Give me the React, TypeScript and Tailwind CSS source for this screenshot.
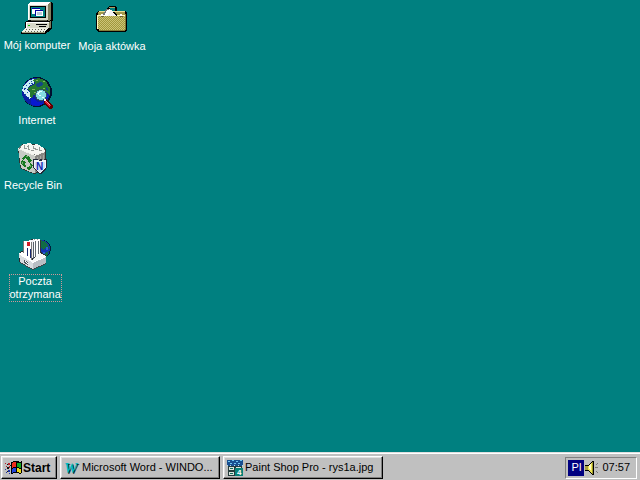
import React from 'react';

const raised = 'border border-t-white border-l-white border-r-black border-b-black shadow-[inset_-1px_-1px_0_#808080,inset_1px_1px_0_#dfdfdf]';

function ComputerIcon() {
  return (
    <svg viewBox="0 0 32 32" className="w-8 h-8" shapeRendering="crispEdges" aria-hidden="true">
      <path d="M9 0h22v1h1v18l-4 3H7V2z" fill="#000" />
      <path d="M9 0h21l-3 2H7z" fill="#fff" />
      <path d="M27 2l3-2v17l-3 3z" fill="#808060" />
      <path d="M7 2h20v16H7z" fill="#d8d8c8" />
      <path d="M7 2h20v1H8v15H7z" fill="#fff" />
      <path d="M9 4h16v12H9z" fill="#000" />
      <path d="M10 5h14v10H10z" fill="#008080" />
      <path d="M11 6h8v6h-8z" fill="#fff" />
      <path d="M11 6h8v1h-8z" fill="#0000a0" />
      <path d="M14 8h8v6h-8z" fill="#0000a0" />
      <path d="M15 9h7v5h-7z" fill="#fff" />
      <path d="M16 10h5v3h-5z" fill="#b8c8d8" />
      <path d="M10 18h16v2H10z" fill="#606050" />
      <path d="M4 20l2-1h25v7l-3 4H4z" fill="#000" />
      <path d="M5 20h23v6H5z" fill="#d8d8c8" />
      <path d="M5 20h23v1H6v5H5z" fill="#fff" />
      <path d="M28 20l2-1v6l-2 2z" fill="#808060" />
      <path d="M7 23h2v1H7z" fill="#00c000" />
      <path d="M15 22h11v1H15zM18 24h7v1h-7z" fill="#000" />
      <path d="M4 26h25l-3 5-2 1H0v-2z" fill="#000" />
      <path d="M4 26h23l-3 4H1z" fill="#f0f0e4" />
      <path d="M1 30h23v1H1z" fill="#a0a080" />
      <path d="M5 27h1v1H5zM8 27h1v1H8zM11 27h1v1h-1zM14 27h1v1h-1zM17 27h1v1h-1zM20 27h1v1h-1zM23 27h1v1h-1zM4 29h1v1H4zM7 29h1v1H7zM10 29h1v1h-1zM13 29h1v1h-1zM16 29h1v1h-1zM19 29h1v1h-1zM22 29h1v1h-1z" fill="#606050" />
    </svg>
  );
}

function BriefcaseIcon() {
  return (
    <svg viewBox="0 0 32 32" className="w-8 h-8" shapeRendering="crispEdges" aria-hidden="true">
      <defs>
        <pattern id="weave" width="2" height="2" patternUnits="userSpaceOnUse">
          <path d="M0 0h2v2H0z" fill="#ccc478" />
          <path d="M0 0h1v1H0zM1 1h1v1H1z" fill="#a0983c" />
        </pattern>
      </defs>
      <path d="M11 5l2-2h6l2 2v5h-2V6l-1-1h-4l-1 1v4h-2z" fill="#000" />
      <path d="M13 4h6v1h-6z" fill="#a8a060" />
      <path d="M2 8h27l2 2v17l-2 2H2l-2-2V11z" fill="#000" />
      <path d="M3 8h26v5H2v-3z" fill="#a49a4a" />
      <path d="M3 8h26v1H3z" fill="#e8e098" />
      <path d="M7 13l3-6 3-1 7 7z" fill="#fff" />
      <path d="M6 13l4-7h3v1h-2l-3 6z" fill="#777" />
      <path d="M12 12l3-5 6 4-1 2h-8z" fill="#f4f4f4" />
      <path d="M17 9h2v1h1v1h1v2h-1v-1h-1v-1h-1v-1h-1z" fill="#000" />
      <path d="M1 13h28v14H3l-2-2z" fill="url(#weave)" />
      <path d="M1 12h7v1H2v13H1zM21 12h8v1h-8z" fill="#fffac0" />
      <path d="M29 11l1-1v16l-1 2z" fill="#807830" />
      <path d="M3 27h26v1H3z" fill="#887c38" />
      <path d="M5 11h2v2H5zM24 11h2v2h-2z" fill="#fff" />
      <path d="M5 13h3v1H5zM24 13h3v1h-3z" fill="#666030" />
    </svg>
  );
}

function InternetIcon() {
  return (
    <svg viewBox="0 0 32 32" className="w-8 h-8" shapeRendering="crispEdges" aria-hidden="true">
      <circle cx="16" cy="15" r="15" fill="#001030" />
      <circle cx="15" cy="15" r="14" fill="#0a20a0" />
      <path d="M3 8l4-4 5-2h4l-3 2v3l-4 1-1 3-3 1-1-1-2 3H1z" fill="#c8edf4" />
      <path d="M2 13l4-1 2 3 2 2v3l-2 2-3-3-2-3z" fill="#d8f0f4" />
      <path d="M5 8h1v1H5zM8 6h1v1H8zM6 15h1v1H6zM4 17h1v2H4zM7 10h1v1H7zM10 4h1v1h-1zM3 11h1v1H3zM7 20h1v1H7zM10 6h2v1h-2z" fill="#1850a0" />
      <path d="M13 2l5-1 5 2 3 3 3 5v8l-4-4-3-2-4 1-3 3-3 1-1 4-2-3v-4l-2-3 2-3 4-1 1-2-2-2z" fill="#247830" />
      <path d="M16 6l4-1 2 2-1 2-4 1-2-1zM25 10l2 2v3l-2-2z" fill="#144488" />
      <path d="M15 3h2v1h-2zM11 12h3v1h-3zM22 4h2v1h-2zM22 11h2v1h-2zM13 15h2v1h-2z" fill="#78b45c" />
      <path d="M10 21l3 1 3 3 6 1-2 2-5 1-5-2z" fill="#0818d0" />
      <path d="M24 16l3 2-1 4-2 1z" fill="#0818d0" />
      <circle cx="20" cy="18" r="6" fill="#305060" />
      <circle cx="20" cy="18" r="5" fill="#85dbe2" />
      <path d="M16 17l2-3h3v1h-2l-1 3zM21 20h2v1h-2zM18 18h2v1h-2z" fill="#e8ffff" />
      <path d="M23 23l2-1 7 6v2l-2 2h-2l-5-6z" fill="#600000" />
      <path d="M24 23l6 5-2 2-4-5z" fill="#df1730" />
      <path d="M25 24l4 3v1h-1l-3-3z" fill="#ff94a0" />
      <path d="M23 22h2v2h-2z" fill="#f8f8f8" />
    </svg>
  );
}

function RecycleIcon() {
  return (
    <svg viewBox="0 0 32 32" className="w-8 h-8" shapeRendering="crispEdges" aria-hidden="true">
      <path d="M1 6l4-4h15l9 5-1 20-10 5-4-1L3 26z" fill="#303432" />
      <path d="M1 6l4-3 23 4v3l-9 4z" fill="#737873" />
      <path d="M3 7l3-5 7-1 2 2 5-1 7 4 1 4-8 3-16-4z" fill="#f6f7f2" />
      <path d="M7 3h1v3h2v1H7zM11 3h1v4h1v1h-2V5h-1V4h1zM16 4h1v2h2v1h2v1h-3V7h-2zM22 5h1v3h2v1h-3zM14 8h3v1h-3z" fill="#949894" />
      <path d="M1 6l17 7v18h-2L4 26z" fill="#c8cbc5" />
      <path d="M18 13l10-4-1 17-9 5z" fill="#868682" />
      <path d="M1 6l17 7 10-4v1l-10 4L1 7z" fill="#f1f1eb" />
      <path d="M20 15h1v13h-1zM23 14h1v13h-1zM26 13h1v12h-1z" fill="#a8a8a4" />
      <path d="M8 13l4 1 2 4h1l-2 3-3-2h1l-1-2-2-1-1 2-2-1zM5 18l4 2-1 1 1 3-1 2-3-3-1-3zM13 21l3 2-2 4-2 1v1l-3-3 2-2v1l2-1z" fill="#167820" />
      <path d="M9 14h2v1H9zM5 20h1v2H5zM13 23h1v2h-1z" fill="#77a471" />
      <path d="M16 17h4l2 1 2-1 2 1 4-1v8l-2 4-4 3h-1l-4-3-3-4z" fill="#202838" />
      <path d="M17 18h3l3 1 3-1h3v7l-2 3-4 3-4-3-2-3z" fill="#f2f5fa" />
      <path d="M18 20h10v5l-2 3-3 2-3-2-2-3z" fill="#d4e0f6" />
      <text x="19" y="28" fontFamily="Liberation Sans, sans-serif" fontSize="10" fontWeight="bold" fill="#1129b4">N</text>
    </svg>
  );
}

function InboxIcon() {
  return (
    <svg viewBox="0 0 32 32" className="w-8 h-8" shapeRendering="crispEdges" aria-hidden="true">
      <circle cx="23" cy="11" r="9" fill="#002038" />
      <circle cx="22" cy="11" r="9" fill="#1230b0" />
      <path d="M20 2l5 1 4 4 1 4-3-1-3 2-3-4zM26 15l4-2-2 6-3 1z" fill="#116b45" />
      <path d="M27 9h2v3h-2zM24 14h2v2h-2z" fill="#2860d0" />
      <path d="M0 15l5-3 2 8 13-7 7 4v8l-13 7L0 24z" fill="#282c30" />
      <path d="M12 1h9l1 2v17h-8z" fill="#303438" />
      <path d="M14 1h7v18h-7z" fill="#fff" />
      <path d="M16 3h1v18h-1zM19 3h1v16h-1z" fill="#606870" />
      <path d="M15 1h1v1h-1zM18 1h1v1h-1z" fill="#999" />
      <path d="M10 2h5v18h-5z" fill="#f0f0f4" />
      <path d="M14 4h1v18h-1z" fill="#586068" />
      <path d="M5 3h7v19H9l-4-3z" fill="#fff" />
      <path d="M4 3h1v14H4zM12 4h1v18h-1z" fill="#777" />
      <path d="M8 4h3v4H8z" fill="#d11c25" />
      <path d="M8 10h1v8H8zM11 11h1v9h-1z" fill="#182870" />
      <path d="M0 15l3-1 11 9v8L1 24z" fill="#d8dce0" />
      <path d="M0 15l3-1 11 9v2L1 17z" fill="#fff" />
      <path d="M18 17l3-2 6 3-13 7-1-2z" fill="#f8f8f8" />
      <path d="M14 24l13-6v7l-13 6z" fill="#b9bec4" />
      <path d="M14 24l13-6v1l-13 6z" fill="#fff" />
      <path d="M5 22l4 2v3l-4-2z" fill="#50565c" />
      <path d="M6 23l3 2v1l-3-2z" fill="#fff" />
      <path d="M1 24l13 7 13-6v1l-13 6L1 25z" fill="#3f4448" />
    </svg>
  );
}

function StartFlag() {
  return (
    <svg viewBox="0 0 17 15" className="w-[17px] h-[15px] shrink-0" shapeRendering="crispEdges" aria-hidden="true">
      <path d="M6 2l3-1h3l3 1 2-1v12l-2 1-3-1H9l-3 1z" fill="#000" />
      <path d="M7 3l2-1h2v5H9L7 8z" fill="#ef2d1b" />
      <path d="M12 3h4v4l-1 1-3-1z" fill="#13a520" />
      <path d="M7 9l2-1h2v4H9l-2 1z" fill="#2045dd" />
      <path d="M12 8l3 1 1-1v4l-1 1-3-1z" fill="#ecd920" />
      <path d="M3 3h2v2H3zM4 6h1v2H4zM0 3h1v1H0zM1 6h1v1H1z" fill="#b7232b" />
      <path d="M3 10h2v2H3zM0 9h1v1H0zM1 12h1v1H1zM4 13h1v1H4z" fill="#2236a6" />
      <path d="M2 4h1v1H2zM2 7h2v2H2zM2 11h1v1H2zM5 5h1v1H5z" fill="#111" />
    </svg>
  );
}

function WordIcon() {
  return (
    <svg viewBox="0 0 16 16" className="w-4 h-4 shrink-0 overflow-visible" aria-hidden="true">
      <g fontFamily="Liberation Serif, serif" fontSize="15" fontWeight="bold" fontStyle="italic">
        <text x="1" y="14" fill="#002c34">W</text>
        <text x="0" y="13" fill="#00b8c4">W</text>
      </g>
    </svg>
  );
}

function PaintShopIcon() {
  return (
    <svg viewBox="0 0 16 16" className="w-4 h-4 shrink-0" shapeRendering="crispEdges" aria-hidden="true">
      <path d="M0 0h16v6H0z" fill="#184f91" />
      <path d="M1 1h2v1H1zM5 0h2v1H5zM9 1h2v1H9zM13 0h2v1h-2zM3 3h2v1H3zM7 3h2v1H7zM11 3h2v1h-2z" fill="#6dc7f2" />
      <path d="M0 5h1v1H0zM3 5h1v1H3zM7 5h1v1H7zM11 5h1v1h-1zM15 5h1v1h-1z" fill="#b8dcec" />
      <path d="M1 6h14v10H1z" fill="#243c3c" />
      <path d="M2 7h5v3H2zM9 7h5v1H9zM2 12h5v3H2z" fill="#d9e4de" />
      <path d="M3 8h3v1H3zM3 13h3v1H3z" fill="#12705d" />
      <path d="M8 8h8v8H8z" fill="#078278" />
      <text x="10" y="15" fontFamily="Liberation Sans, sans-serif" fontSize="8" fontWeight="bold" fill="#fff">4</text>
    </svg>
  );
}

function SpeakerIcon() {
  return (
    <svg viewBox="0 0 16 16" className="w-4 h-4 shrink-0" shapeRendering="crispEdges" aria-hidden="true">
      <path d="M1 5h3l4-4h2v14H8l-4-4H1z" fill="#000" />
      <path d="M1 6h3v4H1z" fill="#a8a040" />
      <path d="M4 6l4-4v12l-4-4z" fill="#eee554" />
      <path d="M5 5l2-2v8L5 9z" fill="#fffcc8" />
      <path d="M8 2h1v12H8z" fill="#9b962a" />
      <path d="M12 4h1v1h-1zM13 3h1v1h-1zM11 7h3v1h-3zM12 11h1v1h-1zM13 12h1v1h-1z" fill="#777" />
    </svg>
  );
}

interface Shortcut {
  label: string;
  icon: React.ReactNode;
  place: string;
  selected?: boolean;
}

const shortcuts: Shortcut[] = [
  { label: 'Mój komputer', icon: <ComputerIcon />, place: 'left-0 top-0.5' },
  { label: 'Moja aktówka', icon: <BriefcaseIcon />, place: 'left-[75px] top-[3px]' },
  { label: 'Internet', icon: <InternetIcon />, place: 'left-0 top-[77px]' },
  { label: 'Recycle Bin', icon: <RecycleIcon />, place: '-left-1 top-[142px]' },
  { label: 'Poczta otrzymana', icon: <InboxIcon />, place: '-left-0.5 top-[238px]', selected: true },
];

function DesktopShortcut({ label, icon, place, selected }: Shortcut) {
  return (
    <button className={`absolute ${place} flex w-[74px] flex-col items-center gap-1 text-white`}>
      {icon}
      <span className={`leading-[13px] border border-dotted ${selected ? 'w-[53px] border-[#d09898]' : 'whitespace-nowrap border-transparent'}`}>{label}</span>
    </button>
  );
}

function TaskButton({ icon, title }: { icon: React.ReactNode; title: string }) {
  return (
    <button className={`flex h-[23px] w-40 min-w-0 items-center gap-0.5 px-[3px] text-left whitespace-nowrap ${raised}`}>
      {icon}
      <span>{title}</span>
    </button>
  );
}

export default function App() {
  return (
    <div className="flex h-screen flex-col overflow-hidden bg-[#008080] font-['Liberation_Sans',Arial,sans-serif] text-[11px] leading-[13px] text-black select-none">
      <main className="relative flex-1">
        {shortcuts.map(s => <DesktopShortcut key={s.label} {...s} />)}
      </main>
      <footer className="flex h-7 items-center border-t border-[#dfdfdf] bg-[#c0c0c0] pt-0.5 pr-[3px] pl-px shadow-[inset_0_1px_0_#fff]">
        <button className={`mr-[3px] flex h-[23px] w-14 items-center gap-px px-[3px] text-xs font-bold ${raised}`}>
          <StartFlag />
          Start
        </button>
        <nav className="flex min-w-0 flex-1 gap-[3px]">
          <TaskButton icon={<WordIcon />} title="Microsoft Word - WINDO..." />
          <TaskButton icon={<PaintShopIcon />} title="Paint Shop Pro - rys1a.jpg" />
        </nav>
        <div className="flex h-[22px] items-center border border-t-[#808080] border-l-[#808080] border-r-white border-b-white px-0.5">
          <button className="h-4 w-4 bg-[#000080] text-center text-white">Pl</button>
          <button aria-label="Volume"><SpeakerIcon /></button>
          <time className="pr-1 pl-0.5 text-[11px]">07:57</time>
        </div>
      </footer>
    </div>
  );
}
